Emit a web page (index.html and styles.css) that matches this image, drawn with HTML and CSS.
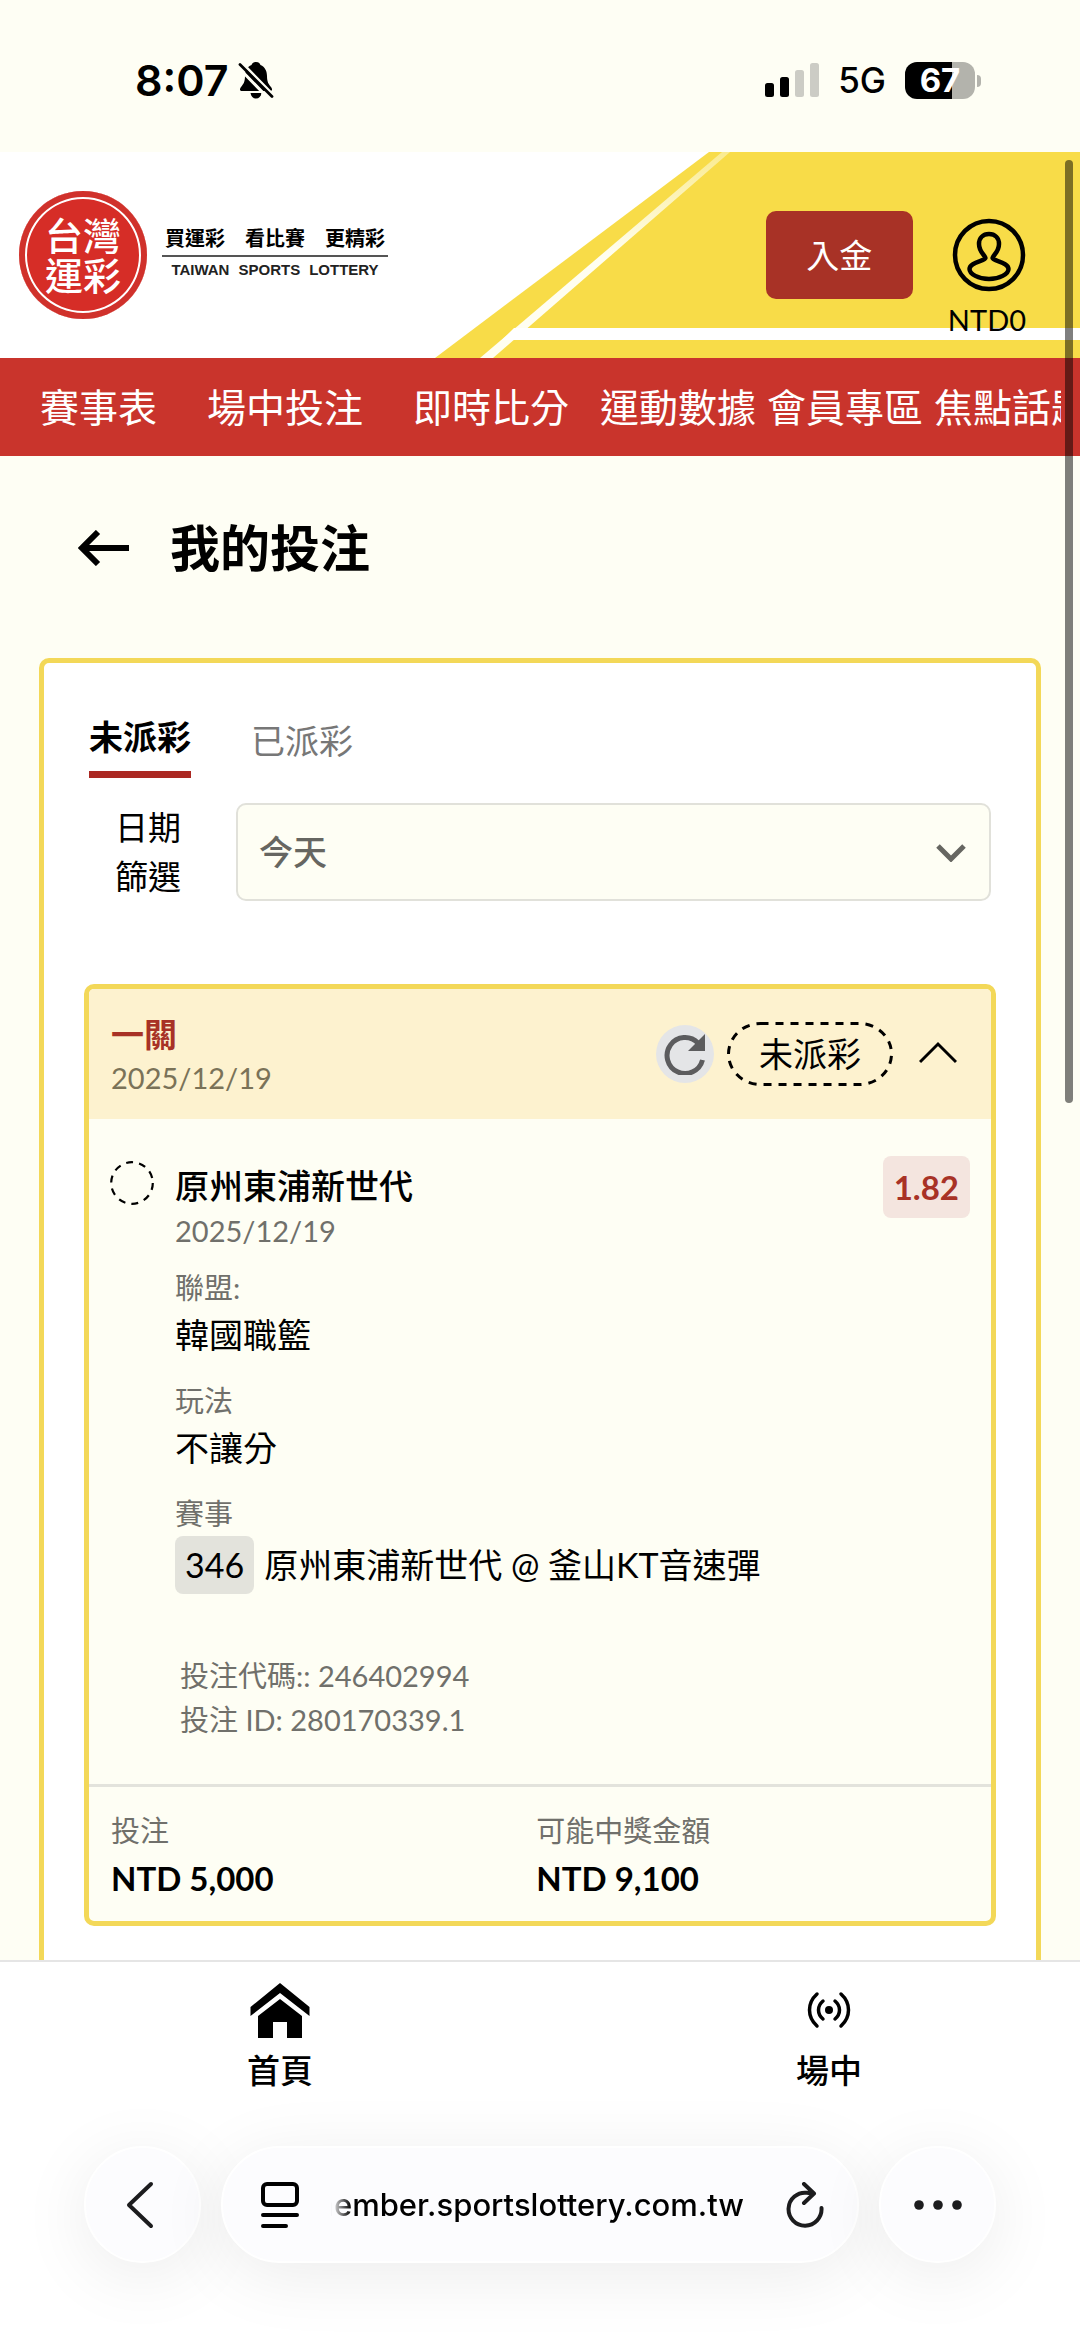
FILE: index.html
```html
<!DOCTYPE html>
<html lang="zh-Hant">
<head>
  <meta charset="UTF-8" />
  <meta name="viewport" content="width=device-width, initial-scale=1" />
  <title>我的投注</title>
  <link rel="stylesheet" href="styles.css">
</head>
<body>

  <div class="status-bar">
    <div class="status-group">
      <span class="clock">8:07</span>
      <svg width="36" height="38" viewBox="0 0 36 38">
        <path d="M18 1c-3 0-4 1.500-4.500 3C9 6 7 10 7 15c0 6-1.500 8-4 11-1.500 2-1.500 4 1 4h28c2.500 0 2.500-2 1-4-2.500-3-4-5-4-11 0-5-2-9-6.500-11C22 2.500 21 1 18 1z" />
        <path d="M12.500 32h11c-.5 3.500-2.500 5.500-5.500 5.500s-5-2-5.500-5.500z" />
        <path d="M0 6l32 33M4 2l32 33" stroke="#fefef4" stroke-width="3" />
        <path d="M2 3.500l32 32" stroke="#000" stroke-width="2.800" stroke-linecap="round" />
      </svg>
    </div>
    <div class="status-group right">
      <svg width="54" height="36" viewBox="0 0 54 36">
        <rect x="0" y="21" width="9" height="14" rx="2.500" />
        <rect x="15" y="15" width="9" height="20" rx="2.500" />
        <rect x="30" y="8" width="9" height="27" rx="2.500" fill="#ccccc5" />
        <rect x="45" y="1" width="9" height="34" rx="2.500" fill="#ccccc5" />
      </svg>
      <span class="network">5G</span>
      <div class="battery"><span>67</span></div>
    </div>
  </div>

  <header class="site-header">
    <svg class="header-bg" viewBox="0 0 1080 206" preserveAspectRatio="none">
      <defs>
        <linearGradient id="stripe" x1="0" y1="0" x2="0" y2="1">
          <stop offset="0" stop-color="#faeb90" />
          <stop offset="0.5" stop-color="#fffef0" />
        </linearGradient>
      </defs>
      <polygon points="709,0 1080,0 1080,206 435,206" fill="#f8dc48" />
      <polygon points="722,0 730,0 493,206 480,206" fill="url(#stripe)" />
      <polygon points="514,176 1080,176 1080,188 502,188" fill="#fff" />
    </svg>
    <a href="#" class="brand">
      <span class="logo"><span>台灣</span><span>運彩</span></span>
      <span class="slogan">
        <span class="slogan-zh"><span>買運彩</span><span>看比賽</span><span>更精彩</span></span>
        <span class="slogan-en"><span>TAIWAN</span><span>SPORTS</span><span>LOTTERY</span></span>
      </span>
    </a>
    <div class="account">
      <button type="button" class="deposit">入金</button>
      <a href="#" class="profile">
        <svg width="74" height="74" viewBox="0 0 74 74" fill="none" stroke="#000" stroke-width="4.500" stroke-linejoin="round">
          <circle cx="37" cy="37" r="34" />
          <path d="M33.500 40c0-2-6.500-6-6.500-14 0-6 4-10 10-10s10 4 10 10c0 8-6.500 12-6.500 14 0 3 16 4 16 11 0 5-9 10-19.500 10S17.500 56 17.500 51c0-7 16-8 16-11z" />
        </svg>
        <span>NTD0</span>
      </a>
    </div>
  </header>

  <nav class="main-nav">
    <ul>
      <li class="wide"><a href="#">賽事表</a></li>
      <li class="wide"><a href="#">場中投注</a></li>
      <li class="medium"><a href="#">即時比分</a></li>
      <li><a href="#">運動數據</a></li>
      <li><a href="#">會員專區</a></li>
      <li><a href="#">焦點話題</a></li>
    </ul>
  </nav>

  <main>
    <div class="page-title">
      <a href="#" aria-label="返回">
        <svg width="52" height="36" viewBox="0 0 52 36" fill="none" stroke="#000" stroke-width="6">
          <path d="M51 18H5M20 2L4 18l16 16" />
        </svg>
      </a>
      <h1>我的投注</h1>
    </div>

    <section class="panel">
      <div class="tabs">
        <button type="button" class="tab active">未派彩</button>
        <button type="button" class="tab">已派彩</button>
      </div>

      <div class="filter">
        <label for="dateFilter">日期篩選</label>
        <div class="select-wrap">
          <select id="dateFilter">
            <option>今天</option>
          </select>
          <svg width="30" height="18" viewBox="0 0 30 18" fill="none" stroke="#666661" stroke-width="5">
            <path d="M2 2l13 13L28 2" />
          </svg>
        </div>
      </div>

      <article class="bet">
        <div class="bet-head">
          <div class="bet-name">
            <h2>一關</h2>
            <p class="date">2025/12/19</p>
          </div>
          <button type="button" class="refresh" aria-label="重新整理">
            <svg width="42" height="42" viewBox="0 0 42 42">
              <path d="M34 10A18 18 0 1 0 38.500 27" fill="none" stroke="#5c5c5e" stroke-width="5" />
              <path d="M41 1v17H24z" fill="#5c5c5e" />
            </svg>
          </button>
          <span class="status">
            <svg width="100%" height="100%"><rect x="1.500" y="1.500" rx="32" ry="32" /></svg>
            未派彩
          </span>
          <button type="button" class="toggle" aria-label="收合">
            <svg width="38" height="26" viewBox="0 0 38 26" fill="none" stroke="#000" stroke-width="3">
              <path d="M1 21L19 3l18 18" />
            </svg>
          </button>
        </div>

        <div class="bet-body">
          <svg class="pending" width="44" height="44" viewBox="0 0 44 44" fill="none" stroke="#000" stroke-width="2.200">
            <circle cx="22" cy="22" r="20.800" stroke-dasharray="7 6.070" />
          </svg>
          <div class="bet-detail">
            <h3>原州東浦新世代</h3>
            <p class="date">2025/12/19</p>
            <dl>
              <dt>聯盟:</dt>
              <dd>韓國職籃</dd>
              <dt>玩法</dt>
              <dd>不讓分</dd>
              <dt>賽事</dt>
              <dd class="match"><span class="match-no">346</span>原州東浦新世代 @ 釜山KT音速彈</dd>
            </dl>
            <div class="codes">
              <p>投注代碼:: 246402994</p>
              <p>投注 ID: 280170339.1</p>
            </div>
          </div>
          <span class="odds">1.82</span>
        </div>

        <div class="bet-foot">
          <div>
            <p class="foot-label">投注</p>
            <p class="amount">NTD 5,000</p>
          </div>
          <div>
            <p class="foot-label">可能中獎金額</p>
            <p class="amount">NTD 9,100</p>
          </div>
        </div>
      </article>
    </section>
  </main>

  <footer>
    <div class="tab-bar">
      <a href="#">
        <svg width="60" height="56" viewBox="0 0 60 56">
          <path d="M30 1l29.500 24v9L30 11 .5 34v-9z" />
          <path d="M30 17l22 17v22H37V40H23v16H8V34z" />
        </svg>
        首頁
      </a>
      <a href="#">
        <svg width="48" height="56" viewBox="0 0 48 56" fill="none" stroke="#000" stroke-width="3.500" stroke-linecap="round">
          <circle cx="24" cy="28" r="4" fill="#000" stroke="none" />
          <path d="M18 19c-6 5-6 13 0 18M30 19c6 5 6 13 0 18M12 12c-10 9-10 23 0 32M36 12c10 9 10 23 0 32" />
        </svg>
        場中
      </a>
    </div>

    <div class="browser-bar">
      <button type="button" class="round" aria-label="上一頁">
        <svg width="34" height="48" viewBox="0 0 34 48" fill="none" stroke="#1c1c1e" stroke-width="4" stroke-linecap="round" stroke-linejoin="round">
          <path d="M25 3L3 24l22 21" />
        </svg>
      </button>
      <div class="url-bar">
        <svg width="38" height="46" viewBox="0 0 38 46" fill="none" stroke="#000" stroke-width="4" stroke-linecap="round">
          <rect x="2" y="2" width="34" height="21" rx="4" />
          <path d="M2 33h34M2 44h23" />
        </svg>
        <button type="button" class="url"><span>member.sportslottery.com.tw</span></button>
        <button type="button" class="reload" aria-label="重新載入">
          <svg width="38" height="46" viewBox="0 0 38 46" fill="none" stroke="#1c1c1e" stroke-width="4" stroke-linecap="round" stroke-linejoin="round">
            <path d="M18 2l10 9.500-10 9.500M26 11.500L21 10.800A16.500 16.500 0 1 0 35.500 26" />
          </svg>
        </button>
      </div>
      <button type="button" class="round" aria-label="更多">
        <svg width="48" height="10" viewBox="0 0 48 10" fill="#1c1c1e">
          <circle cx="5" cy="5" r="4.800" />
          <circle cx="24" cy="5" r="4.800" />
          <circle cx="43" cy="5" r="4.800" />
        </svg>
      </button>
    </div>
  </footer>

  <div class="scroll-thumb"></div>

</body>
</html>
```
FILE: styles.css
```css
* {
  box-sizing: border-box;
  margin: 0;
  padding: 0;
}

body {
  position: relative;
  display: flex;
  flex-direction: column;
  height: 100vh;
  overflow: hidden;
  font-family: Lato, 'Noto Sans CJK TC', sans-serif;
  font-size: 34px;
  line-height: 50px;
  color: #000;
  background: #fefef4;
}

a {
  color: inherit;
  text-decoration: none;
}

ul {
  list-style: none;
}

button {
  border: none;
  background: none;
  font: inherit;
  color: inherit;
  cursor: pointer;
}

svg {
  display: block;
  flex-shrink: 0;
}

/* status bar */
.status-bar {
  display: flex;
  justify-content: space-between;
  align-items: center;
  height: 152px;
  padding: 8px 100px 0 135px;
  font-family: Inter, sans-serif;
}

.status-group {
  display: flex;
  align-items: center;
  gap: 9px;
}

.status-group.right {
  gap: 19px;
}

.clock {
  font-size: 43px;
  font-weight: 600;
}

.network {
  font-size: 35px;
  font-weight: 500;
}

.battery {
  position: relative;
  width: 70px;
  height: 37px;
  margin-right: 5px;
  border-radius: 12px;
  background: linear-gradient(to right, #000 67%, #b3b3ac 67%);
  color: #fff;
  font-size: 33px;
  font-weight: 700;
  line-height: 37px;
  text-align: center;
}

.battery::after {
  content: '';
  position: absolute;
  right: -6px;
  top: 13px;
  width: 4px;
  height: 12px;
  border-radius: 0 4px 4px 0;
  background: #b3b3ac;
}

/* header */
.site-header {
  position: relative;
  display: flex;
  justify-content: space-between;
  align-items: flex-start;
  height: 206px;
  padding: 39px 54px 0 19px;
  background: #fff;
}

.header-bg {
  position: absolute;
  top: 0;
  left: 0;
  width: 100%;
  height: 100%;
}

.brand,
.account {
  position: relative;
  display: flex;
}

.brand {
  align-items: center;
  gap: 15px;
}

.logo {
  display: flex;
  flex-direction: column;
  align-items: center;
  justify-content: center;
  width: 128px;
  height: 128px;
  border-radius: 50%;
  background: #d62d27;
  box-shadow: inset 0 0 0 6px #d0312b, inset 0 0 0 8px #fff;
  color: #fff;
  font-size: 38px;
  font-weight: 500;
  line-height: 40px;
}

.slogan {
  display: flex;
  flex-direction: column;
}

.slogan-zh,
.slogan-en {
  display: flex;
  justify-content: center;
}

.slogan-zh {
  gap: 20px;
  padding: 0 3px;
  border-bottom: 2px solid #555;
  font-size: 20px;
  font-weight: 700;
  line-height: 33px;
}

.slogan-en {
  gap: 9px;
  padding-bottom: 5px;
  color: #222;
  font-family: 'Liberation Sans', sans-serif;
  font-size: 15px;
  font-weight: 700;
  line-height: 26px;
}

.account {
  align-items: flex-start;
  gap: 35px;
}

.deposit {
  width: 147px;
  height: 88px;
  margin-top: 20px;
  border-radius: 10px;
  background: #a83226;
  color: #fff;
  font-size: 33px;
}

.profile {
  display: flex;
  flex-direction: column;
  align-items: flex-end;
  padding-top: 27px;
  font-size: 29px;
  line-height: 56px;
}

/* navigation */
.main-nav {
  padding: 0 19px 0 40px;
  background: #c9342c;
  color: #fff;
}

.main-nav ul {
  display: flex;
  gap: 11px;
  overflow: hidden;
}

.main-nav li {
  flex-shrink: 0;
  font-size: 39px;
  line-height: 98px;
  white-space: nowrap;
}

.main-nav .wide {
  margin-right: 39px;
}

.main-nav .medium {
  margin-right: 20px;
}

/* page */
main {
  flex: 1;
  min-height: 0;
  padding: 0 39px;
  overflow: hidden;
}

.page-title {
  display: flex;
  align-items: center;
  gap: 40px;
  padding: 56px 39px 74px;
}

h1 {
  font-size: 50px;
  font-weight: 700;
  line-height: 72px;
}

.panel {
  padding: 49px 40px 80px;
  border: 5px solid #f3d858;
  border-radius: 10px;
  background: #fff;
}

.tabs {
  display: flex;
  align-items: flex-start;
  gap: 60px;
  padding: 0 5px;
}

.tab {
  padding-top: 4px;
  color: #777;
}

.tab.active {
  padding: 0 0 9px;
  border-bottom: 7px solid #ab2822;
  color: #000;
  font-weight: 700;
}

.filter {
  display: flex;
  gap: 55px;
  margin-top: 25px;
  padding: 0 5px;
}

.filter label {
  width: 92px;
  font-size: 33px;
  line-height: 49px;
  text-align: right;
}

.select-wrap {
  position: relative;
  flex: 1;
}

.select-wrap select {
  width: 100%;
  height: 98px;
  padding: 0 21px;
  border: 2px solid #e1e1da;
  border-radius: 10px;
  background: #fefef4;
  color: #666661;
  font: inherit;
  font-weight: 500;
  appearance: none;
}

.select-wrap svg {
  position: absolute;
  right: 25px;
  top: 41px;
  pointer-events: none;
}

/* bet card */
.bet {
  margin-top: 83px;
  border: 5px solid #f3d858;
  border-radius: 10px;
  background: #fefef4;
  overflow: hidden;
}

.bet-head {
  display: flex;
  align-items: center;
  padding: 21px 34px 21px 22px;
  background: #fdf2cf;
}

.bet-name {
  flex: 1;
}

h2 {
  color: #a83226;
  font-size: 33px;
  font-weight: 700;
  line-height: 48px;
}

.date {
  color: #70706b;
  font-size: 29px;
  line-height: 40px;
}

.bet-head .date {
  color: #7a7258;
}

.refresh {
  display: flex;
  align-items: center;
  justify-content: center;
  width: 58px;
  height: 58px;
  margin-right: 13px;
  border-radius: 50%;
  background: #e4e5e7;
}

.status {
  position: relative;
  width: 166px;
  margin-right: 26px;
  line-height: 64px;
  text-align: center;
}

.status svg {
  position: absolute;
  inset: 0;
}

.status rect {
  width: calc(100% - 3px);
  height: calc(100% - 3px);
  fill: none;
  stroke: #000;
  stroke-width: 3px;
  stroke-dasharray: 8 7;
}

.bet-body {
  display: flex;
  align-items: flex-start;
  padding: 37px 21px 42px;
}

.pending {
  margin: 5px 21px 0 0;
}

.bet-detail {
  flex: 1;
  padding-top: 5px;
}

h3 {
  font-size: 34px;
  font-weight: 500;
}

dt {
  margin-top: 19px;
  color: #70706b;
  font-size: 29px;
  line-height: 44px;
}

dl dt:first-child {
  margin-top: 15px;
}

.match {
  display: flex;
  align-items: center;
  gap: 10px;
}

.match-no {
  padding: 0 10px;
  border-radius: 8px;
  background: #e3e3dc;
  line-height: 58px;
}

.codes {
  margin-top: 60px;
  padding-left: 5px;
  color: #70706b;
  font-size: 29px;
  line-height: 44px;
}

.odds {
  padding: 0 11px;
  border-radius: 8px;
  background: #f4e5df;
  color: #a83226;
  font-size: 33px;
  font-weight: 700;
  line-height: 62px;
}

.bet-foot {
  display: grid;
  grid-template-columns: 49% 51%;
  padding: 22px 12px 18px 22px;
  border-top: 3px solid #e3e3dc;
}

.foot-label {
  color: #70706b;
  font-size: 29px;
  line-height: 44px;
}

.amount {
  font-size: 33px;
  font-weight: 700;
}

/* bottom bars */
footer {
  border-top: 2px solid #e5e5e5;
  background: #fff;
  overflow: hidden;
}

.tab-bar {
  display: flex;
  justify-content: space-between;
  padding: 20px 218px 0 247px;
}

.tab-bar a {
  display: flex;
  flex-direction: column;
  align-items: center;
  gap: 10px;
  font-size: 33px;
  font-weight: 500;
  line-height: 44px;
}

.browser-bar {
  display: flex;
  gap: 20px;
  padding: 54px 84px 84px;
}

.round,
.url-bar {
  display: flex;
  align-items: center;
  height: 117px;
  border: 2px solid #fff;
  border-radius: 59px;
  background: #fcfcfe;
  box-shadow: 0 12px 70px rgba(0, 0, 0, 0.08);
}

.round {
  justify-content: center;
  width: 117px;
}

.url-bar {
  flex: 1;
  min-width: 0;
  padding: 0 33px 0 38px;
}

.url {
  display: flex;
  flex: 1;
  justify-content: flex-end;
  min-width: 0;
  margin: 0 42px 0 32px;
  overflow: hidden;
  font-family: Inter, sans-serif;
  font-size: 31px;
  font-weight: 500;
  -webkit-mask-image: linear-gradient(to right, transparent, #000 20px);
  mask-image: linear-gradient(to right, transparent, #000 20px);
}

.scroll-thumb {
  position: absolute;
  top: 160px;
  right: 7px;
  width: 8px;
  height: 943px;
  border-radius: 4px;
  background: rgba(0, 0, 0, 0.5);
}
```
